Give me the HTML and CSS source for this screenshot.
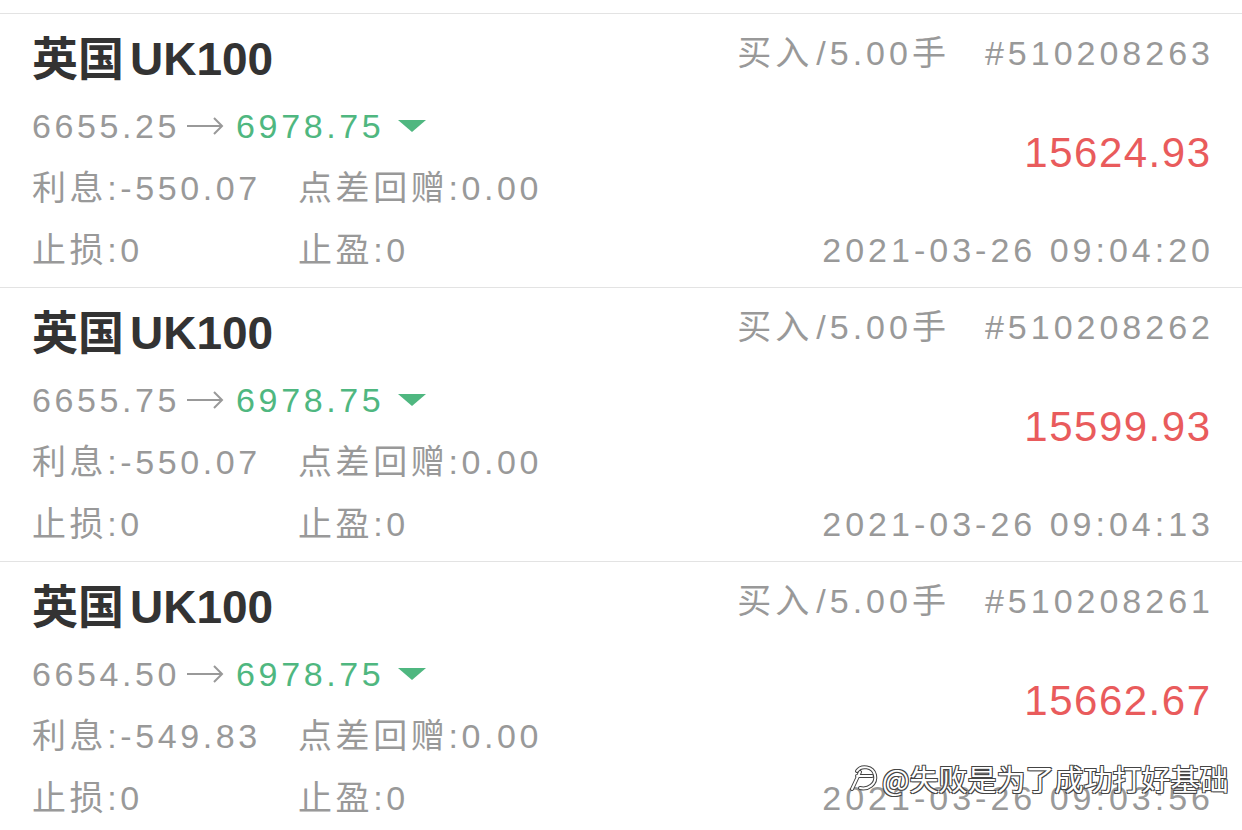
FILE: index.html
```html
<!DOCTYPE html>
<html lang="zh-CN">
<head>
    <meta charset="UTF-8">
    <meta name="viewport" content="width=device-width, initial-scale=1.0">
    <title>持仓记录</title>
    <link rel="stylesheet" href="styles.css">
</head>
<body>
    <div class="list">
        <!-- 订单 1 -->
        <div class="order">
            <div class="left">
                <div class="title">英国<span class="code">UK100</span></div>
                <div class="price">6655.25<svg class="arrow" width="38" height="20" viewBox="0 0 38 20"><path d="M1 10 H36 M28 2 L36 10 L28 18" fill="none" stroke="#999" stroke-width="2"/></svg><span class="now">6978.75</span><span class="down"></span></div>
                <div class="info"><span>利息:-550.07</span><span>点差回赠:0.00</span></div>
                <div class="info"><span>止损:0</span><span>止盈:0</span></div>
            </div>
            <div class="right">
                <div class="meta">买入<span class="lots">/5.00</span>手<span class="ticket">#510208263</span></div>
                <div class="profit">15624.93</div>
                <div class="time">2021-03-26 09:04:20</div>
            </div>
        </div>
        <!-- 订单 2 -->
        <div class="order">
            <div class="left">
                <div class="title">英国<span class="code">UK100</span></div>
                <div class="price">6655.75<svg class="arrow" width="38" height="20" viewBox="0 0 38 20"><path d="M1 10 H36 M28 2 L36 10 L28 18" fill="none" stroke="#999" stroke-width="2"/></svg><span class="now">6978.75</span><span class="down"></span></div>
                <div class="info"><span>利息:-550.07</span><span>点差回赠:0.00</span></div>
                <div class="info"><span>止损:0</span><span>止盈:0</span></div>
            </div>
            <div class="right">
                <div class="meta">买入<span class="lots">/5.00</span>手<span class="ticket">#510208262</span></div>
                <div class="profit">15599.93</div>
                <div class="time">2021-03-26 09:04:13</div>
            </div>
        </div>
        <!-- 订单 3 -->
        <div class="order">
            <div class="left">
                <div class="title">英国<span class="code">UK100</span></div>
                <div class="price">6654.50<svg class="arrow" width="38" height="20" viewBox="0 0 38 20"><path d="M1 10 H36 M28 2 L36 10 L28 18" fill="none" stroke="#999" stroke-width="2"/></svg><span class="now">6978.75</span><span class="down"></span></div>
                <div class="info"><span>利息:-549.83</span><span>点差回赠:0.00</span></div>
                <div class="info"><span>止损:0</span><span>止盈:0</span></div>
            </div>
            <div class="right">
                <div class="meta">买入<span class="lots">/5.00</span>手<span class="ticket">#510208261</span></div>
                <div class="profit">15662.67</div>
                <div class="time">2021-03-26 09:03:56</div>
            </div>
        </div>
    </div>

    <!-- 水印 -->
    <div class="watermark">
        <svg class="wm-icon" width="32" height="30" viewBox="0 0 32 30">
            <g fill="none" stroke-linecap="round">
                <path d="M9 8 C13 2 25 3 27 12 C29 21 20 27 12 25 M9 13 H24 M4 26 L12 9" stroke="#444" stroke-width="4"/>
                <path d="M9 8 C13 2 25 3 27 12 C29 21 20 27 12 25 M9 13 H24 M4 26 L12 9" stroke="#fff" stroke-width="2"/>
            </g>
        </svg>
        <span>@失败是为了成功打好基础</span>
    </div>
</body>
</html>
```

FILE: styles.css
```css
body {
    margin: 0;
    font-family: "Liberation Sans", "Noto Sans CJK SC", sans-serif;
    background-color: #fff;
    color: #999;
    overflow: hidden;
}
.list {
    margin-top: 13px;
}
.order {
    display: flex;
    justify-content: space-between;
    border-top: 1px solid #e3e3e3;
    padding: 14px 32px 6px 32px;
    height: 253px;
}
.left {
    display: flex;
    flex-direction: column;
}
.title {
    font-size: 46px;
    line-height: 62px;
    font-weight: bold;
    color: #333;
    white-space: nowrap;
}
.code {
    margin-left: 6px;
}
.price,
.info {
    font-size: 34px;
    line-height: 62px;
    letter-spacing: 3.6px;
    white-space: nowrap;
}
.price {
    margin-top: 5px;
    display: flex;
    align-items: center;
}
.arrow {
    margin: 0 12px 0 6px;
}
.now {
    color: #4fb780;
}
.down {
    width: 0;
    height: 0;
    margin-left: 14px;
    border-left: 14px solid transparent;
    border-right: 14px solid transparent;
    border-top: 12px solid #4fb780;
}
.info {
    display: grid;
    grid-template-columns: 266px auto;
}
.right {
    display: flex;
    flex-direction: column;
    align-items: flex-end;
}
.meta {
    font-size: 34px;
    line-height: 50px;
    letter-spacing: 4px;
    margin-right: -4px;
    white-space: nowrap;
}
.lots {
    margin-left: 3px;
}
.ticket {
    margin-left: 35px;
}
.profit {
    margin-top: 50px;
    font-size: 42px;
    line-height: 50px;
    letter-spacing: 1.5px;
    margin-right: -1.5px;
    color: #e95b5c;
}
.time {
    margin-top: 41px;
    font-size: 34px;
    line-height: 62px;
    letter-spacing: 4px;
    margin-right: -4px;
    white-space: nowrap;
}
.watermark {
    position: absolute;
    left: 848px;
    top: 761px;
    display: flex;
    align-items: center;
    gap: 2px;
    font-family: "Noto Sans CJK SC", sans-serif;
    font-size: 29px;
    line-height: 34px;
    color: #fff;
    text-shadow: -1px -1px 0 #444, 1px -1px 0 #444, -1px 1px 0 #444, 1px 1px 0 #444;
}
```
